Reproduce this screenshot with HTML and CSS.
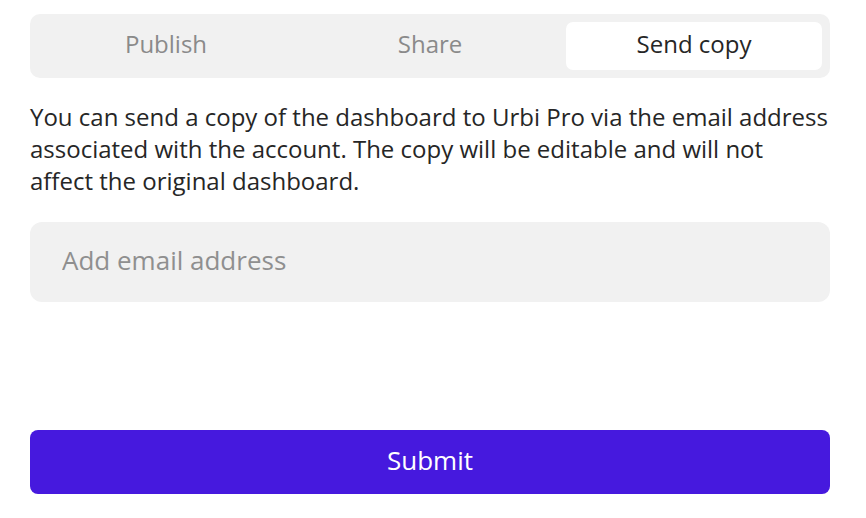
FILE: index.html
```html
<!DOCTYPE html>
<html lang="en">
<head>
<meta charset="utf-8">
<title>Send copy</title>
<link rel="stylesheet" href="styles.css">
</head>
<body>
<main class="panel">
  <nav class="tabs">
    <button class="tab">Publish</button>
    <button class="tab">Share</button>
    <button class="tab tab-active">Send copy</button>
  </nav>
  <p class="desc">You can send a copy of the dashboard to Urbi Pro via the email address associated with the account. The copy will be editable and will not affect the original dashboard.</p>
  <input class="email" type="text" placeholder="Add email address">
  <div class="spacer"></div>
  <button class="submit">Submit</button>
</main>
</body>
</html>
```
FILE: styles.css
```css
* { box-sizing: border-box; }
html, body { margin: 0; padding: 0; background: #fff; }
body { font-family: "Open Sans", "Noto Sans", sans-serif; color: #262626; }
.panel {
  width: 800px;
  margin: 14px 0 0 30px;
  display: flex;
  flex-direction: column;
}
.tabs {
  display: flex;
  gap: 8px;
  padding: 8px;
  background: #f1f1f1;
  border-radius: 10px;
  height: 64px;
}
.tab {
  flex: 1;
  border: 0;
  background: transparent;
  font-family: inherit;
  font-size: 24px;
  line-height: 44px;
  color: #8a8a8a;
  border-radius: 7px;
  padding: 0 0 4px;
}
.tab-active { background: #fff; color: #262626; }
.desc {
  margin: 23px 0 0;
  font-size: 24px;
  line-height: 32px;
}
.email {
  margin-top: 25px;
  height: 80px;
  border: 0;
  border-radius: 12px;
  background: #f1f1f1;
  padding: 0 32px 4px;
  font-family: inherit;
  font-size: 26px;
  color: #262626;
  outline: none;
}
.email::placeholder { color: #8f8f8f; }
.spacer { height: 128px; }
.submit {
  height: 64px;
  border: 0;
  border-radius: 8px;
  background: #4619de;
  color: #fff;
  font-family: inherit;
  font-size: 26px;
  padding: 0 0 4px;
}
```
